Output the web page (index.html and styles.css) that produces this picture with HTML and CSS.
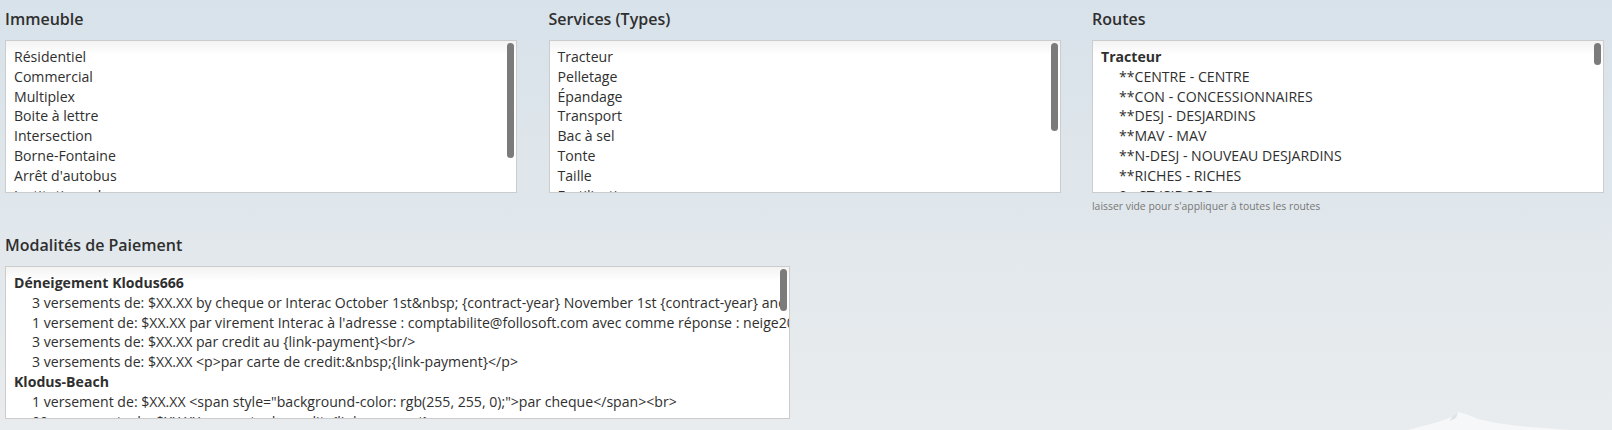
FILE: index.html
```html
<!DOCTYPE html>
<html lang="fr">
<head>
    <meta charset="UTF-8">
    <meta name="viewport" content="width=device-width, initial-scale=1.0">
    <title>Filtres</title>
    <link rel="stylesheet" href="styles.css">
</head>
<body>
    <div class="filters">
        <div class="field">
            <label class="field-label">Immeuble</label>
            <div class="listbox">
                <div class="listbox-items">
                    <div class="item">Résidentiel</div>
                    <div class="item">Commercial</div>
                    <div class="item">Multiplex</div>
                    <div class="item">Boite à lettre</div>
                    <div class="item">Intersection</div>
                    <div class="item">Borne-Fontaine</div>
                    <div class="item">Arrêt d'autobus</div>
                    <div class="item">Institutionnel</div>
                </div>
                <span class="thumb" style="top: 2px; height: 115px;"></span>
            </div>
        </div>

        <div class="field">
            <label class="field-label">Services (Types)</label>
            <div class="listbox">
                <div class="listbox-items">
                    <div class="item">Tracteur</div>
                    <div class="item">Pelletage</div>
                    <div class="item">Épandage</div>
                    <div class="item">Transport</div>
                    <div class="item">Bac à sel</div>
                    <div class="item">Tonte</div>
                    <div class="item">Taille</div>
                    <div class="item">Fertilisation</div>
                </div>
                <span class="thumb" style="top: 2px; height: 88px;"></span>
            </div>
        </div>

        <div class="field">
            <label class="field-label">Routes</label>
            <div class="listbox">
                <div class="listbox-items">
                    <div class="group">Tracteur</div>
                    <div class="item sub">**CENTRE - CENTRE</div>
                    <div class="item sub">**CON - CONCESSIONNAIRES</div>
                    <div class="item sub">**DESJ - DESJARDINS</div>
                    <div class="item sub">**MAV - MAV</div>
                    <div class="item sub">**N-DESJ - NOUVEAU DESJARDINS</div>
                    <div class="item sub">**RICHES - RICHES</div>
                    <div class="item sub">0 - ST-ISIDORE</div>
                </div>
                <span class="thumb" style="top: 2px; height: 22px;"></span>
            </div>
            <p class="hint">laisser vide pour s'appliquer à toutes les routes</p>
        </div>
    </div>

    <div class="filters filters-second">
        <div class="field field-wide">
            <label class="field-label">Modalités de Paiement</label>
            <div class="listbox">
                <div class="listbox-items">
                    <div class="group">Déneigement Klodus666</div>
                    <div class="item sub">3 versements de: $XX.XX by cheque or Interac October 1st&amp;nbsp; {contract-year} November 1st {contract-year} and December 1st {contract-year}</div>
                    <div class="item sub">1 versement de: $XX.XX par virement Interac à l'adresse : comptabilite@follosoft.com avec comme réponse : neige2023</div>
                    <div class="item sub">3 versements de: $XX.XX par credit au {link-payment}&lt;br/&gt;</div>
                    <div class="item sub">3 versements de: $XX.XX &lt;p&gt;par carte de credit:&amp;nbsp;{link-payment}&lt;/p&gt;</div>
                    <div class="group">Klodus-Beach</div>
                    <div class="item sub">1 versement de: $XX.XX &lt;span style="background-color: rgb(255, 255, 0);"&gt;par cheque&lt;/span&gt;&lt;br&gt;</div>
                    <div class="item sub">90 versements de: $XX.XX par carte de credit: {link-payment}</div>
                </div>
                <span class="thumb" style="top: 2px; height: 42px;"></span>
            </div>
        </div>
    </div>

    <svg class="peak" width="160" height="20" viewBox="0 0 160 20">
        <polygon points="0,20 30,12 44,7 50,2 58,4 70,9 88,13 110,16 160,20" fill="#f6f7f8"/>
        <polygon points="44,7 50,2 48,8 42,11" fill="#dfe3e6"/>
    </svg>
</body>
</html>
```

FILE: styles.css
```css
html, body {
    margin: 0;
    height: 100%;
}

body {
    position: relative;
    overflow: hidden;
    font-family: "Open Sans", "Liberation Sans", sans-serif;
    font-size: 14.1px;
    color: #2f2f2f;
    background: linear-gradient(180deg, #d8e2ea 0%, #e2e8ec 60%, #e9ecee 100%);
}

.filters {
    display: grid;
    grid-template-columns: repeat(3, 512px);
    column-gap: 31.5px;
    padding: 8px 8px 0 5px;
}

.filters-second {
    grid-template-columns: 785px;
    padding-top: 21px;
}

.field {
    display: flex;
    flex-direction: column;
}

.field-label {
    font-size: 16px;
    font-weight: 600;
    line-height: 22px;
    margin-bottom: 10px;
}

.listbox {
    position: relative;
    height: 151px;
    border: 1px solid #cccccc;
    background: linear-gradient(180deg, #f3f3f3 0px, #ffffff 14px);
    overflow: hidden;
}

.listbox-items {
    padding: 6px 8px 0;
    white-space: nowrap;
}

.item,
.group {
    line-height: 19.8px;
}

.group {
    font-weight: 700;
}

.sub {
    padding-left: 18px;
}

.thumb {
    position: absolute;
    right: 2px;
    width: 7px;
    border-radius: 4px;
    background-color: #7b7b7b;
}

.hint {
    margin: 6px 0 0;
    font-size: 10.4px;
    line-height: 14px;
    color: #777777;
}

.peak {
    position: absolute;
    left: 1408px;
    bottom: 0;
}
```
